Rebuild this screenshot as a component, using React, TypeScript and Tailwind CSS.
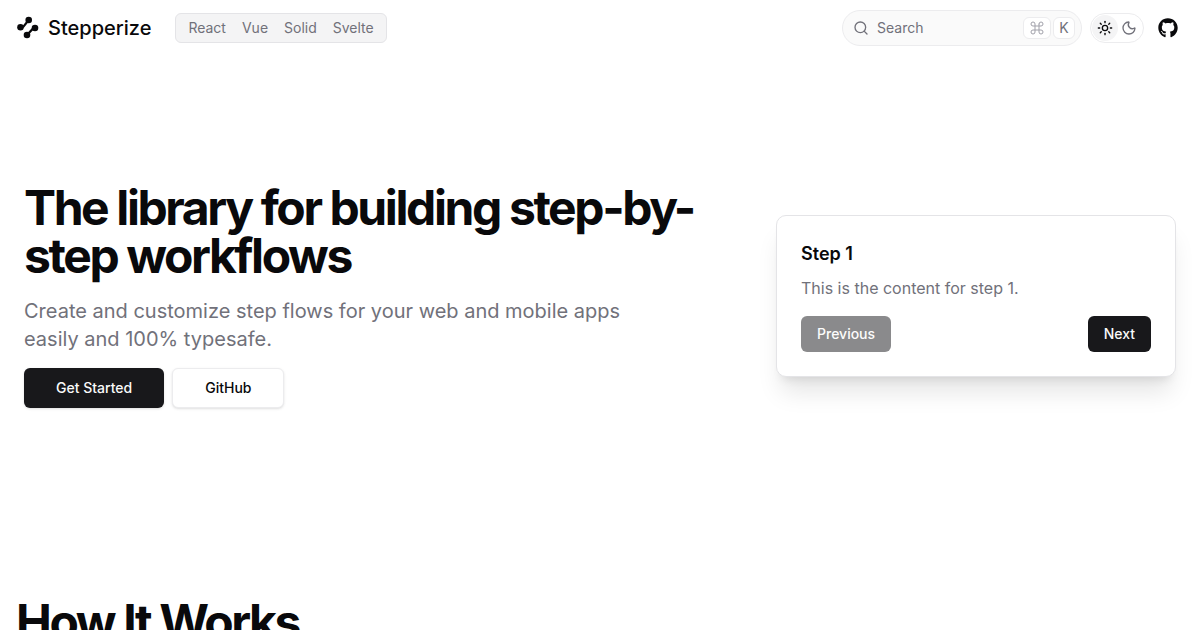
import { Command, Moon, Search, Sun } from "lucide-react";
import { FaGithub } from "react-icons/fa";

function Logo() {
  return (
    <svg width="24" height="24" viewBox="0 0 24 24" className="text-[#09090b]">
      <circle cx="12.7" cy="4" r="3.3" fill="currentColor" />
      <circle cx="4.5" cy="11.3" r="3.3" fill="currentColor" />
      <circle cx="19" cy="12" r="3.3" fill="currentColor" />
      <circle cx="11" cy="19" r="3.3" fill="currentColor" />
      <path d="M12.7 4 7.4 10.6H4.5M19 13.2H16.4L11 19" fill="none" stroke="currentColor" strokeWidth="2.2" />
    </svg>
  );
}

function Header() {
  return (
    <header className="flex h-14 items-center justify-between pl-4 pr-[22px]">
      <div className="flex items-center gap-6">
        <div className="flex items-center gap-2">
          <Logo />
          <span className="text-[20px] font-medium leading-7 text-[#09090b]">Stepperize</span>
        </div>
        <nav className="flex h-[30px] items-center gap-4 rounded-md border border-[#e4e4e7] bg-[#f4f4f5] px-3 text-sm text-[#71717a]">
          <span>React</span>
          <span>Vue</span>
          <span>Solid</span>
          <span>Svelte</span>
        </nav>
      </div>
      <div className="flex items-center gap-2">
        <div className="flex h-9 w-60 items-center justify-between rounded-full border border-[#ececee] bg-[#fafafa] pl-[10px] pr-[6px]">
          <div className="flex items-center gap-2 text-sm text-[#71717a]">
            <Search size={16} />
            <span>Search</span>
          </div>
          <div className="flex items-center gap-[2px] text-[#71717a]">
            <span className="flex h-[22px] w-7 items-center justify-center rounded-md border border-[#ececee] bg-white text-[#a1a1aa]">
              <Command size={16} strokeWidth={1.5} />
            </span>
            <span className="flex h-[22px] w-[22px] items-center justify-center rounded-md border border-[#ececee] bg-white text-sm">K</span>
          </div>
        </div>
        <div className="flex h-[30px] w-[54px] items-center gap-0 rounded-full border border-[#ececee] px-[1px]">
          <span className="flex h-[26px] w-[26px] items-center justify-center rounded-full bg-[#f4f4f5] text-[#09090b]">
            <Sun size={16} />
          </span>
          <span className="-ml-[1px] flex h-[26px] w-[26px] items-center justify-center text-[#71717a]">
            <Moon size={16} />
          </span>
        </div>
        <FaGithub className="ml-[6px] h-5 w-5 text-[#09090b]" />
      </div>
    </header>
  );
}

function Hero() {
  return (
    <section className="flex h-[480px] items-center justify-between px-6">
      <div className="w-[680px]">
        <h1 className="text-5xl font-bold leading-[48px] tracking-tighter text-[#09090b]">
          The library for building step-by-step workflows
        </h1>
        <p className="mt-[17px] w-[640px] text-xl leading-7 text-[#71717a]">
          Create and customize step flows for your web and mobile apps easily and 100% typesafe.
        </p>
        <div className="mt-[15px] flex gap-2">
          <button className="h-10 rounded-md bg-[#18181b] px-8 text-sm font-medium text-[#fafafa] shadow">Get Started</button>
          <button className="h-10 rounded-md border border-[#ececee] bg-white px-8 text-sm font-medium text-[#09090b] shadow-sm">GitHub</button>
        </div>
      </div>
      <div className="w-[400px] rounded-[10px] border border-[#e4e4e7] bg-white p-6 shadow-xl">
        <h2 className="text-lg font-semibold leading-7 text-[#09090b]">Step 1</h2>
        <p className="mt-2 text-base leading-6 text-[#71717a]">This is the content for step 1.</p>
        <div className="mt-4 flex justify-between">
          <button className="h-9 rounded-md bg-[#18181b] px-4 text-sm font-medium text-[#fafafa] opacity-50">Previous</button>
          <button className="h-9 rounded-md bg-[#18181b] px-4 text-sm font-medium text-[#fafafa]">Next</button>
        </div>
      </div>
    </section>
  );
}

export default function App() {
  return (
    <div className="h-[630px] overflow-hidden bg-white font-['Inter',sans-serif] antialiased">
      <Header />
      <Hero />
      <h2 className="mt-[62px] pl-4 text-5xl font-bold leading-[48px] tracking-tighter text-[#09090b]">How It Works</h2>
    </div>
  );
}
